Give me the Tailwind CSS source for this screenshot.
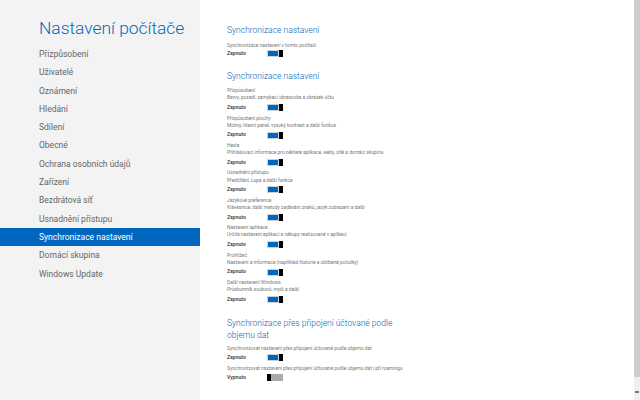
<!DOCTYPE html>
<html lang="en">
<head>
    <meta charset="UTF-8">
    <title>Nastavení počítače</title>
    <script src="https://cdn.jsdelivr.net/npm/@tailwindcss/browser@4"></script>
</head>
<body class="bg-white w-[640px] h-[400px] overflow-hidden font-['Roboto',sans-serif]">
    <div class="flex h-[400px]">
        <!-- Left menu -->
        <div class="w-[200px] shrink-0 bg-[#f3f3f3] pt-[15px]">
            <h1 class="pl-[39px] text-[17.4px] leading-[26px] font-light text-[#0067c0] mb-[4px]">Nastavení počítače</h1>
            <ul class="text-[8.5px] leading-[18.3px] text-[#666]">
                <li class="pl-[39px]">Přizpůsobení</li>
                <li class="pl-[39px]">Uživatelé</li>
                <li class="pl-[39px]">Oznámení</li>
                <li class="pl-[39px]">Hledání</li>
                <li class="pl-[39px]">Sdílení</li>
                <li class="pl-[39px]">Obecné</li>
                <li class="pl-[39px]">Ochrana osobních údajů</li>
                <li class="pl-[39px]">Zařízení</li>
                <li class="pl-[39px]">Bezdrátová síť</li>
                <li class="pl-[39px]">Usnadnění přístupu</li>
                <li class="pl-[39px] bg-[#0067c0] text-white">Synchronizace nastavení</li>
                <li class="pl-[39px]">Domácí skupina</li>
                <li class="pl-[39px]">Windows Update</li>
            </ul>
        </div>

        <!-- Settings -->
        <div class="flex-1 pl-[27px] pt-[23px] text-[4.85px] leading-[7.2px] text-[#777]">
            <h2 class="text-[8.5px] leading-[14px] font-light text-[#0067c0] mb-[5px]">Synchronizace nastavení</h2>
            <p>Synchronizace nastavení v tomto počítači</p>
            <div class="flex items-center h-[7px] mt-[1px] mb-[12px]"><span class="w-[40px] text-[5.1px] font-medium text-[#333]">Zapnuto</span><span class="flex w-[16px] h-[7px]"><span class="flex-1 bg-[#0067c0] border border-[#d0d0d0]"></span><span class="w-[4px] bg-black"></span></span></div>

            <h2 class="text-[8.5px] leading-[14px] font-light text-[#0067c0] mb-[4px]">Synchronizace nastavení</h2>
            <div class="flex flex-col gap-[3.5px]">
                <div>
                    <p>Přizpůsobení</p>
                    <p>Barvy, pozadí, zamykací obrazovka a obrázek účtu</p>
                    <div class="flex items-center h-[7px] mt-[2.5px]"><span class="w-[40px] text-[5.1px] font-medium text-[#333]">Zapnuto</span><span class="flex w-[16px] h-[7px]"><span class="flex-1 bg-[#0067c0] border border-[#d0d0d0]"></span><span class="w-[4px] bg-black"></span></span></div>
                </div>
                <div>
                    <p>Přizpůsobení plochy</p>
                    <p>Motivy, hlavní panel, vysoký kontrast a další funkce</p>
                    <div class="flex items-center h-[7px] mt-[2.5px]"><span class="w-[40px] text-[5.1px] font-medium text-[#333]">Zapnuto</span><span class="flex w-[16px] h-[7px]"><span class="flex-1 bg-[#0067c0] border border-[#d0d0d0]"></span><span class="w-[4px] bg-black"></span></span></div>
                </div>
                <div>
                    <p>Hesla</p>
                    <p>Přihlašovací informace pro některé aplikace, weby, sítě a domácí skupinu</p>
                    <div class="flex items-center h-[7px] mt-[2.5px]"><span class="w-[40px] text-[5.1px] font-medium text-[#333]">Zapnuto</span><span class="flex w-[16px] h-[7px]"><span class="flex-1 bg-[#0067c0] border border-[#d0d0d0]"></span><span class="w-[4px] bg-black"></span></span></div>
                </div>
                <div>
                    <p>Usnadnění přístupu</p>
                    <p>Předčítání, Lupa a další funkce</p>
                    <div class="flex items-center h-[7px] mt-[2.5px]"><span class="w-[40px] text-[5.1px] font-medium text-[#333]">Zapnuto</span><span class="flex w-[16px] h-[7px]"><span class="flex-1 bg-[#0067c0] border border-[#d0d0d0]"></span><span class="w-[4px] bg-black"></span></span></div>
                </div>
                <div>
                    <p>Jazykové preference</p>
                    <p>Klávesnice, další metody zadávání znaků, jazyk zobrazení a další</p>
                    <div class="flex items-center h-[7px] mt-[2.5px]"><span class="w-[40px] text-[5.1px] font-medium text-[#333]">Zapnuto</span><span class="flex w-[16px] h-[7px]"><span class="flex-1 bg-[#0067c0] border border-[#d0d0d0]"></span><span class="w-[4px] bg-black"></span></span></div>
                </div>
                <div>
                    <p>Nastavení aplikace</p>
                    <p>Určitá nastavení aplikací a nákupy realizované v aplikaci</p>
                    <div class="flex items-center h-[7px] mt-[2.5px]"><span class="w-[40px] text-[5.1px] font-medium text-[#333]">Zapnuto</span><span class="flex w-[16px] h-[7px]"><span class="flex-1 bg-[#0067c0] border border-[#d0d0d0]"></span><span class="w-[4px] bg-black"></span></span></div>
                </div>
                <div>
                    <p>Prohlížeč</p>
                    <p>Nastavení a informace (například historie a oblíbené položky)</p>
                    <div class="flex items-center h-[7px] mt-[2.5px]"><span class="w-[40px] text-[5.1px] font-medium text-[#333]">Zapnuto</span><span class="flex w-[16px] h-[7px]"><span class="flex-1 bg-[#0067c0] border border-[#d0d0d0]"></span><span class="w-[4px] bg-black"></span></span></div>
                </div>
                <div>
                    <p>Další nastavení Windows</p>
                    <p>Průzkumník souborů, myši a další</p>
                    <div class="flex items-center h-[7px] mt-[2.5px]"><span class="w-[40px] text-[5.1px] font-medium text-[#333]">Zapnuto</span><span class="flex w-[16px] h-[7px]"><span class="flex-1 bg-[#0067c0] border border-[#d0d0d0]"></span><span class="w-[4px] bg-black"></span></span></div>
                </div>
            </div>

            <h2 class="w-[190px] text-[8.5px] leading-[12px] font-light text-[#0067c0] mt-[14px] mb-[4px]">Synchronizace přes připojení účtované podle objemu dat</h2>
            <p>Synchronizovat nastavení přes připojení účtované podle objemu dat</p>
            <div class="flex items-center h-[7px] mt-[1.5px] mb-[4px]"><span class="w-[40px] text-[5.1px] font-medium text-[#333]">Zapnuto</span><span class="flex w-[16px] h-[7px]"><span class="flex-1 bg-[#0067c0] border border-[#d0d0d0]"></span><span class="w-[4px] bg-black"></span></span></div>
            <p>Synchronizovat nastavení přes připojení účtované podle objemu dat i při roamingu</p>
            <div class="flex items-center h-[7px] mt-[2px]"><span class="w-[40px] text-[5.1px] font-medium text-[#333]">Vypnuto</span><span class="flex w-[16px] h-[7px] bg-[#aaa]"><span class="w-[4px] bg-black"></span></span></div>
        </div>

        <!-- Scrollbar -->
        <div class="relative w-[6px] shrink-0 bg-[#f0f0f0]">
            <div class="h-[377px] bg-[#cdcdcd]"></div>
            <div class="absolute left-[1px] top-[391px] w-[4px] h-[2px] bg-[#777]"></div>
        </div>
    </div>
</body>
</html>
